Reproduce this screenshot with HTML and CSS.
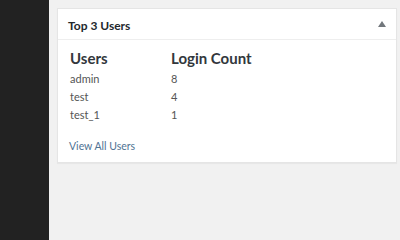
FILE: index.html
```html
<!DOCTYPE html>
<html lang="en">
<head>
    <meta charset="UTF-8">
    <title>Dashboard</title>
    <link rel="stylesheet" href="styles.css">
</head>
<body>
    <div class="sidebar"></div>
    <div class="main">
        <div class="postbox">
            <div class="hndle">
                <h2>Top 3 Users</h2>
                <span class="toggle"></span>
            </div>
            <div class="inside">
                <table class="users">
                    <tr>
                        <th>Users</th>
                        <th>Login Count</th>
                    </tr>
                    <tr><td>admin</td><td>8</td></tr>
                    <tr><td>test</td><td>4</td></tr>
                    <tr><td>test_1</td><td>1</td></tr>
                </table>
                <a href="#" class="view-all">View All Users</a>
            </div>
        </div>
    </div>
</body>
</html>
```

FILE: styles.css
```css
body {
    margin: 0;
    display: flex;
    height: 240px;
    overflow: hidden;
    background-color: #f1f1f1;
    font-family: Lato, sans-serif;
    color: #444;
}
.sidebar {
    width: 49px;
    flex-shrink: 0;
    background-color: #222;
}
.main {
    flex: 1;
    padding: 8px 3px 0 8px;
}
.postbox {
    background-color: #fff;
    border: 1px solid #e5e5e5;
    box-shadow: 0 1px 1px rgba(0,0,0,0.04);
}
.hndle {
    display: flex;
    align-items: center;
    justify-content: space-between;
    height: 30px;
    padding: 0 10px 0 10px;
    border-bottom: 1px solid #eee;
}
.hndle h2 {
    margin: 0;
    padding-top: 2px;
    font-size: 12px;
    font-weight: 700;
    color: #23282d;
}
.toggle {
    width: 0;
    height: 0;
    border-left: 4px solid transparent;
    border-right: 4px solid transparent;
    border-bottom: 6px solid #72777c;
}
.inside {
    padding: 7px 12px 10px;
}
.users {
    border-collapse: collapse;
    font-size: 11px;
}
.users th {
    text-align: left;
    font-size: 15px;
    font-weight: 700;
    color: #32373c;
    padding: 0;
    height: 22px;
}
.users th:first-child {
    width: 101px;
}
.users td {
    padding: 0;
    height: 18px;
    color: #555;
}
.view-all {
    display: block;
    margin-top: 17px;
    margin-left: -1px;
    font-size: 10.5px;
    color: #4f7394;
    text-decoration: none;
}
```
